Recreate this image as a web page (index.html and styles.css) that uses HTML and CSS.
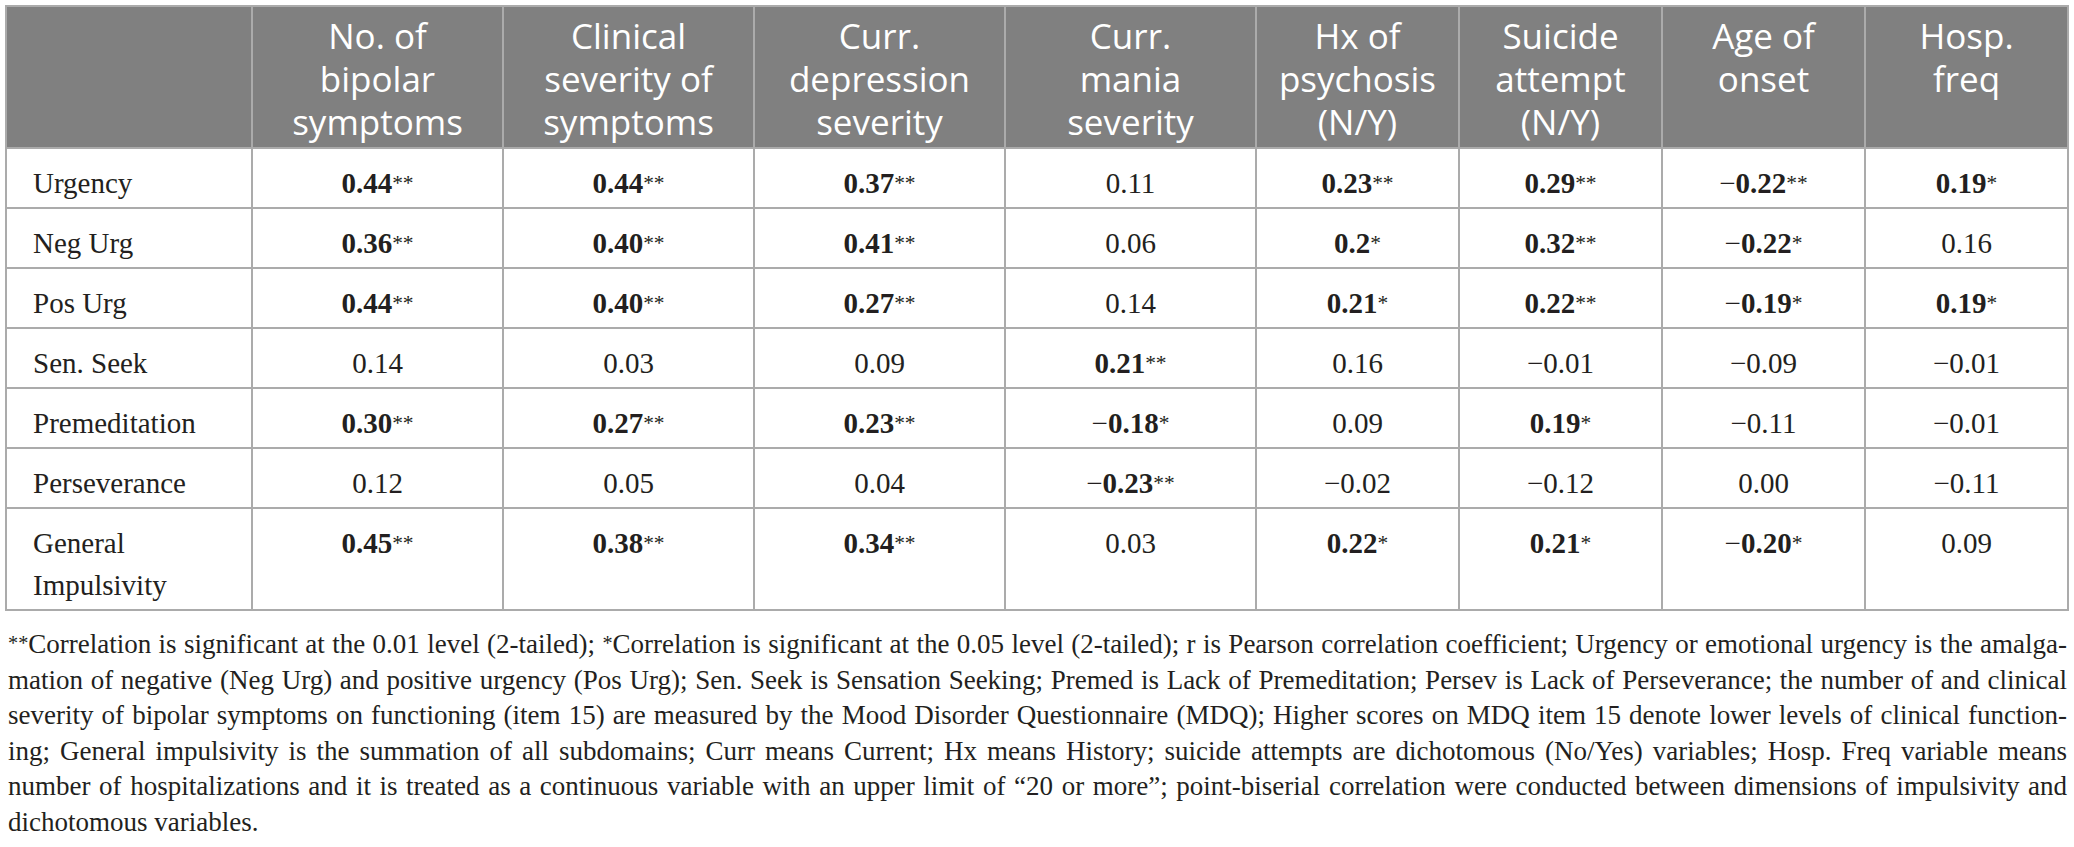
FILE: index.html
```html
<!DOCTYPE html>
<html lang="en">
<head>
    <meta charset="UTF-8">
    <meta name="viewport" content="width=device-width, initial-scale=1.0">
    <title>Correlations</title>
    <link rel="stylesheet" href="styles.css">
</head>
<body>
    <table class="tabla">
        <colgroup>
            <col class="col-etiqueta">
            <col class="col-a"><col class="col-a"><col class="col-a"><col class="col-a">
            <col class="col-b"><col class="col-b"><col class="col-b"><col class="col-b">
        </colgroup>
        <thead>
            <tr>
                <th></th>
                <th>No. of<br>bipolar<br>symptoms</th>
                <th>Clinical<br>severity of<br>symptoms</th>
                <th>Curr.<br>depression<br>severity</th>
                <th>Curr.<br>mania<br>severity</th>
                <th>Hx of<br>psychosis<br>(N/Y)</th>
                <th>Suicide<br>attempt<br>(N/Y)</th>
                <th>Age of<br>onset</th>
                <th>Hosp.<br>freq</th>
            </tr>
        </thead>
        <tbody>
            <tr>
                <td class="etiqueta">Urgency</td>
                <td><b>0.44</b><span class="ast">**</span></td>
                <td><b>0.44</b><span class="ast">**</span></td>
                <td><b>0.37</b><span class="ast">**</span></td>
                <td>0.11</td>
                <td><b>0.23</b><span class="ast">**</span></td>
                <td><b>0.29</b><span class="ast">**</span></td>
                <td>&minus;<b>0.22</b><span class="ast">**</span></td>
                <td><b>0.19</b><span class="ast">*</span></td>
            </tr>
            <tr>
                <td class="etiqueta">Neg Urg</td>
                <td><b>0.36</b><span class="ast">**</span></td>
                <td><b>0.40</b><span class="ast">**</span></td>
                <td><b>0.41</b><span class="ast">**</span></td>
                <td>0.06</td>
                <td><b>0.2</b><span class="ast">*</span></td>
                <td><b>0.32</b><span class="ast">**</span></td>
                <td>&minus;<b>0.22</b><span class="ast">*</span></td>
                <td>0.16</td>
            </tr>
            <tr>
                <td class="etiqueta">Pos Urg</td>
                <td><b>0.44</b><span class="ast">**</span></td>
                <td><b>0.40</b><span class="ast">**</span></td>
                <td><b>0.27</b><span class="ast">**</span></td>
                <td>0.14</td>
                <td><b>0.21</b><span class="ast">*</span></td>
                <td><b>0.22</b><span class="ast">**</span></td>
                <td>&minus;<b>0.19</b><span class="ast">*</span></td>
                <td><b>0.19</b><span class="ast">*</span></td>
            </tr>
            <tr>
                <td class="etiqueta">Sen. Seek</td>
                <td>0.14</td>
                <td>0.03</td>
                <td>0.09</td>
                <td><b>0.21</b><span class="ast">**</span></td>
                <td>0.16</td>
                <td>&minus;0.01</td>
                <td>&minus;0.09</td>
                <td>&minus;0.01</td>
            </tr>
            <tr>
                <td class="etiqueta">Premeditation</td>
                <td><b>0.30</b><span class="ast">**</span></td>
                <td><b>0.27</b><span class="ast">**</span></td>
                <td><b>0.23</b><span class="ast">**</span></td>
                <td>&minus;<b>0.18</b><span class="ast">*</span></td>
                <td>0.09</td>
                <td><b>0.19</b><span class="ast">*</span></td>
                <td>&minus;0.11</td>
                <td>&minus;0.01</td>
            </tr>
            <tr>
                <td class="etiqueta">Perseverance</td>
                <td>0.12</td>
                <td>0.05</td>
                <td>0.04</td>
                <td>&minus;<b>0.23</b><span class="ast">**</span></td>
                <td>&minus;0.02</td>
                <td>&minus;0.12</td>
                <td>0.00</td>
                <td>&minus;0.11</td>
            </tr>
            <tr>
                <td class="etiqueta">General<br>Impulsivity</td>
                <td><b>0.45</b><span class="ast">**</span></td>
                <td><b>0.38</b><span class="ast">**</span></td>
                <td><b>0.34</b><span class="ast">**</span></td>
                <td>0.03</td>
                <td><b>0.22</b><span class="ast">*</span></td>
                <td><b>0.21</b><span class="ast">*</span></td>
                <td>&minus;<b>0.20</b><span class="ast">*</span></td>
                <td>0.09</td>
            </tr>
        </tbody>
    </table>

    <p class="nota">
        <span><span class="ast">**</span>Correlation is significant at the 0.01 level (2-tailed); <span class="ast">*</span>Correlation is significant at the 0.05 level (2-tailed); r is Pearson correlation coefficient; Urgency or emotional urgency is the amalga-</span>
        <span>mation of negative (Neg Urg) and positive urgency (Pos Urg); Sen. Seek is Sensation Seeking; Premed is Lack of Premeditation; Persev is Lack of Perseverance; the number of and clinical</span>
        <span>severity of bipolar symptoms on functioning (item 15) are measured by the Mood Disorder Questionnaire (MDQ); Higher scores on MDQ item 15 denote lower levels of clinical function-</span>
        <span>ing; General impulsivity is the summation of all subdomains; Curr means Current; Hx means History; suicide attempts are dichotomous (No/Yes) variables; Hosp. Freq variable means</span>
        <span>number of hospitalizations and it is treated as a continuous variable with an upper limit of &ldquo;20 or more&rdquo;; point-biserial correlation were conducted between dimensions of impulsivity and</span>
        <span class="fin">dichotomous variables.</span>
    </p>
</body>
</html>
```

FILE: styles.css
```css
body {
    margin: 0;
    padding: 5px 5px 0 5px;
    background-color: white;
    color: #231f20;
    font-family: "Liberation Serif", "Times New Roman", serif;
}

.tabla {
    border-collapse: collapse;
    table-layout: fixed;
    width: 2064px;
}
.col-etiqueta {
    width: 246px;
}
.col-a {
    width: 251px;
}
.col-b {
    width: 203px;
}

.tabla th,
.tabla td {
    border: 2px solid #ababab;
}
.tabla th {
    background-color: #808080;
    color: white;
    font-family: "Open Sans", "Noto Sans", sans-serif;
    font-weight: normal;
    font-size: 35px;
    line-height: 43px;
    padding: 7px 6px 4px;
    text-align: center;
    vertical-align: top;
}
.tabla td {
    font-size: 29px;
    line-height: 42px;
    padding: 13px 6px 3px;
    text-align: center;
    vertical-align: top;
}
.tabla td.etiqueta {
    text-align: left;
    padding-left: 26px;
}

.ast {
    font-size: 0.74em;
    font-weight: normal;
    line-height: 0;
    vertical-align: 3px;
}

.nota {
    margin: 16px 2px 0 3px;
    font-size: 27px;
    line-height: 35.5px;
    text-align: justify;
}
.nota > span {
    display: block;
    text-align-last: justify;
}
.nota > span.fin {
    text-align-last: left;
}
.nota .ast {
    font-size: 0.75em;
    vertical-align: 3px;
}
```
